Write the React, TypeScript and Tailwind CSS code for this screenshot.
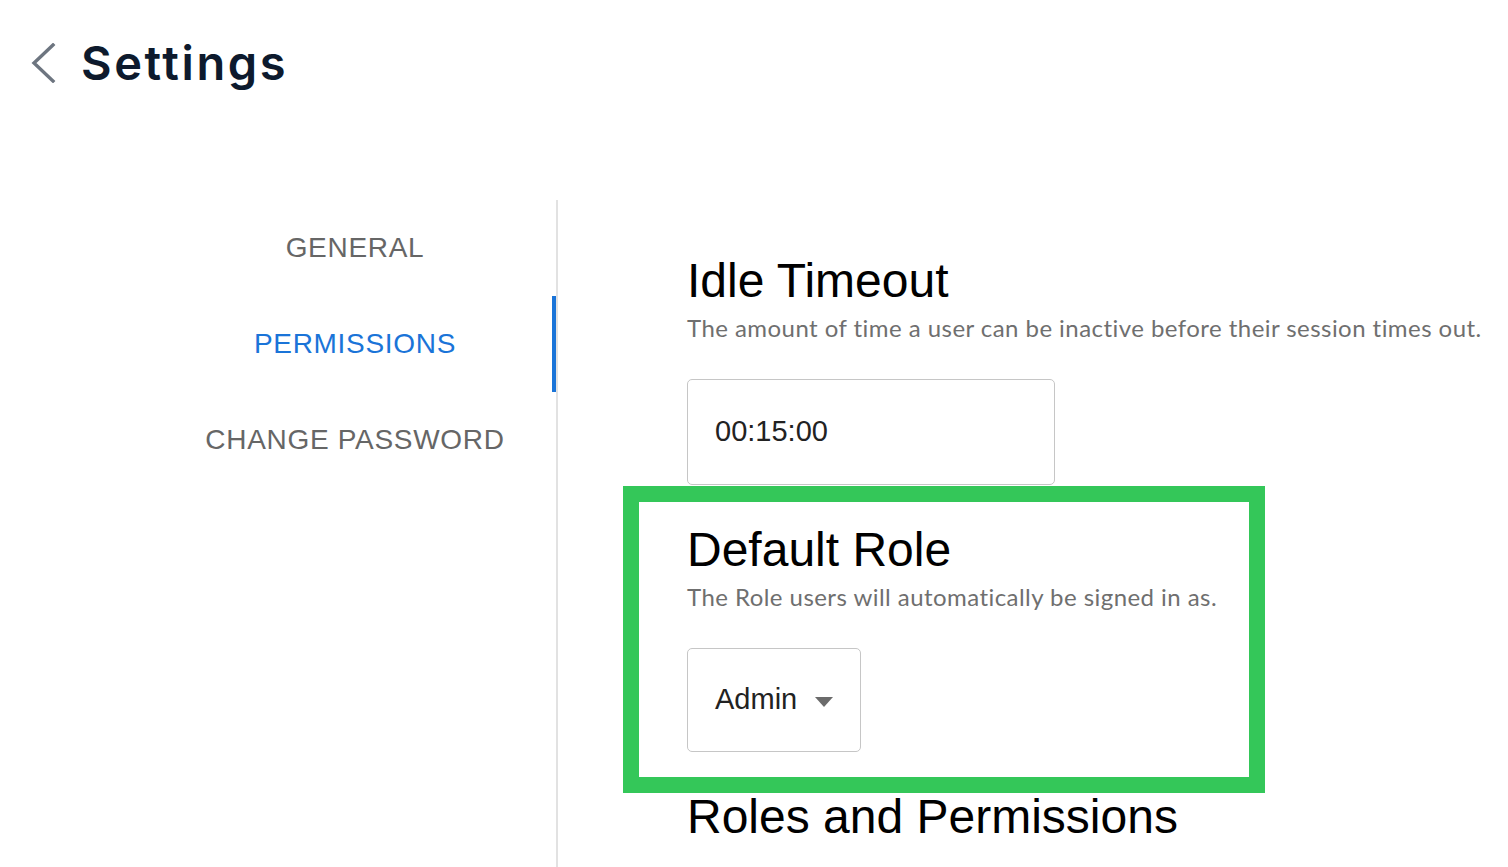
import React from 'react';

const tabs = ['GENERAL', 'PERMISSIONS', 'CHANGE PASSWORD'];

const BackChevron: React.FC = () => (
  <svg width="28" height="40" viewBox="0 0 28 40" fill="none">
    <path d="M24 2 L5 20 L24 38" stroke="#6d7580" strokeWidth="3.4" strokeLinecap="square" />
  </svg>
);

const Caret: React.FC = () => (
  <svg width="18" height="10" viewBox="0 0 18 10">
    <path d="M0 0 H18 L9 10 Z" fill="#6b6b6b" />
  </svg>
);

const SectionTitle: React.FC<{ title: string; hint: string }> = ({ title, hint }) => (
  <>
    <h2 className="text-[48px] leading-[48px] text-black font-['Liberation_Sans',Arial,sans-serif]">{title}</h2>
    <p className="mt-[8px] text-[24px] leading-[30px] tracking-[0.45px] text-[#6f6f6f] font-['Lato',sans-serif]">{hint}</p>
  </>
);

export default function App() {
  const active = 'PERMISSIONS';

  return (
    <div className="w-full h-[867px] overflow-hidden bg-white">
      <header className="h-[200px] flex items-start pt-[43px] pl-[29px]">
        <BackChevron />
        <h1 className="ml-[24px] -mt-[6px] text-[47px] leading-[52px] font-semibold tracking-[2.6px] text-[#0d1a2d] font-['Inter',sans-serif]">
          Settings
        </h1>
      </header>

      <div className="flex h-[667px]">
        <nav className="w-[558px] shrink-0 border-r-2 border-[#e2e2e2] pl-[154px]">
          {tabs.map(tab => (
            <div
              key={tab}
              className={`relative h-[96px] flex items-center justify-center text-[28px] tracking-[0.7px] font-['Liberation_Sans',Arial,sans-serif] ${
                tab === active ? 'text-[#1a74d8]' : 'text-[#666666]'
              }`}
            >
              {tab}
              {tab === active && <span className="absolute right-0 top-0 bottom-0 w-1 bg-[#1a74d8]" />}
            </div>
          ))}
        </nav>

        <main className="pl-[129px] pt-[57px] flex flex-col items-start">
          <SectionTitle
            title="Idle Timeout"
            hint="The amount of time a user can be inactive before their session times out."
          />
          <div className="mt-[36px] w-[368px] h-[106px] border border-[#c6c6c6] rounded-[5px] flex items-center pl-[27px] text-[29px] text-[#222] font-['Liberation_Sans',Arial,sans-serif]">
            00:15:00
          </div>

          <section className="mt-px -ml-[64px] w-[642px] border-[16px] border-[#34c759] pl-[48px] pt-[24px] pb-[25px]">
            <SectionTitle title="Default Role" hint="The Role users will automatically be signed in as." />
            <div className="mt-[36px] w-[174px] h-[104px] border border-[#c6c6c6] rounded-[5px] flex items-center pl-[27px] text-[29px] text-[#222] font-['Liberation_Sans',Arial,sans-serif]">
              Admin
              <span className="ml-[18px] mt-[3px] flex">
                <Caret />
              </span>
            </div>
          </section>

          <h2 className="text-[48px] leading-[48px] text-black font-['Liberation_Sans',Arial,sans-serif]">
            Roles and Permissions
          </h2>
        </main>
      </div>
    </div>
  );
}
